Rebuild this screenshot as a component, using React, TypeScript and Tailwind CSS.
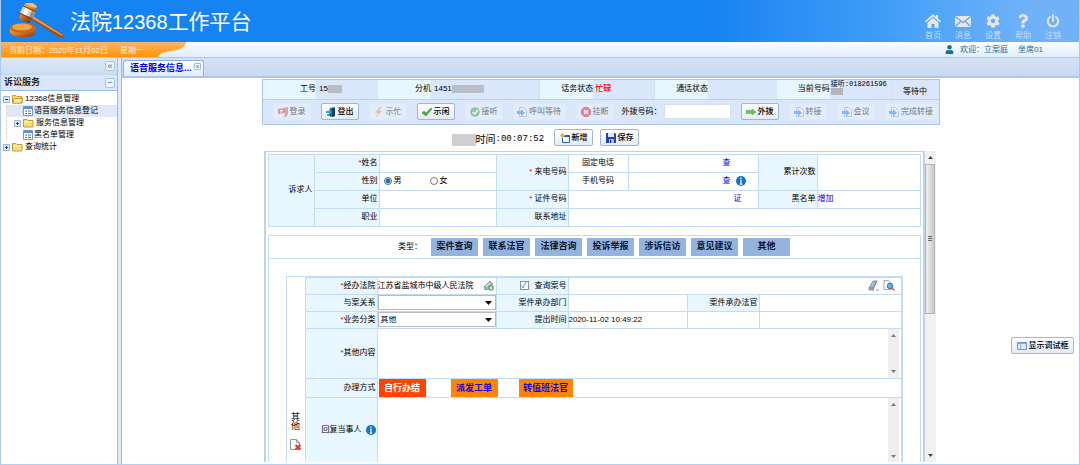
import type { ReactNode } from "react";
import { FaCog, FaQuestion, FaUser } from "react-icons/fa";

const line = "border border-[#c3dcf5]";
const th = `${line} bg-[#e8f6ff] p-0 pr-px text-right font-normal`;
const td = `${line} bg-white p-0`;

function Gavel() {
  return (
    <svg viewBox="0 0 54 36" className="h-9 w-[54px]" aria-hidden="true">
      <defs>
        <linearGradient id="wood" x1="0" y1="0" x2="1" y2="1">
          <stop offset="0" stopColor="#f6b04a" />
          <stop offset="0.5" stopColor="#d9741c" />
          <stop offset="1" stopColor="#7c2c06" />
        </linearGradient>
      </defs>
      <path d="M23 13L54 32l-1 3-4-1-27-17z" fill="#a84a0c" />
      <path d="M23 13L53 32l-1 1-29-17z" fill="#e8964a" />
      <path d="M0 25v4c0 3 6 5 13 5s13-2 13-5v-4z" fill="url(#wood)" />
      <ellipse cx="13" cy="25" rx="13" ry="5" fill="#c9661a" />
      <ellipse cx="12" cy="24" rx="10" ry="3.500" fill="#f0a348" />
      <g transform="rotate(25 18 9)">
        <rect x="12" y="0" width="12" height="19" rx="2" fill="url(#wood)" />
        <rect x="11" y="6" width="14" height="7" fill="#d5d5d5" />
        <rect x="14" y="6" width="4" height="7" fill="#fafafa" />
        <rect x="21" y="6" width="4" height="7" fill="#8f8f8f" />
        <path d="M11 5.500h14M11 13.500h14" stroke="#8a3c0a" />
        <ellipse cx="18" cy="1" rx="6" ry="2" fill="#f7bd68" />
      </g>
    </svg>
  );
}

function HomeIcon({ className }: { className: string }) {
  return (
    <svg viewBox="0 0 16 14" className={className} fill="currentColor" aria-hidden="true">
      <path d="M8 0l3 2.700V1h2v3.500l3 2.800-1 1.200L8 2.500 1 8.500 0 7.300z" />
      <path d="M8 3.800l5.500 4.700V14H9.500v-4h-3v4h-4V8.500z" />
    </svg>
  );
}

function MailIcon({ className }: { className: string }) {
  return (
    <svg viewBox="0 0 16 14" className={className} aria-hidden="true">
      <path d="M0 2h16v11H0z" fill="currentColor" />
      <path d="M0 2.500l8 6 8-6M.5 12.500L6 7M15.500 12.500L10 7" fill="none" stroke="#5aa8f7" strokeWidth="1.200" />
    </svg>
  );
}

function PowerIcon({ className }: { className: string }) {
  return (
    <svg viewBox="0 0 14 14" className={className} fill="none" stroke="currentColor" strokeWidth="2" strokeLinecap="round" aria-hidden="true">
      <path d="M7 1v6M4 3a5.200 5.200 0 1 0 6 0" />
    </svg>
  );
}

function Folder({ open }: { open?: boolean }) {
  return (
    <svg viewBox="0 0 11 10" className="h-2.5 w-[11px] shrink-0" aria-hidden="true">
      <path d="M.5 9V1.500h3.500l1 1h5V9z" fill="#f7dc7c" stroke="#c79a2e" />
      {open ? <path d="M.5 9L2.500 4.500h8L9.500 9z" fill="#fff0a8" stroke="#c79a2e" /> : <path d="M1.500 4h7.500" stroke="#fff6c8" />}
    </svg>
  );
}

function Leaf() {
  return (
    <svg viewBox="0 0 10 10" className="size-2.5 shrink-0" aria-hidden="true">
      <path d="M.5.5h9v9h-9z" fill="#fff" stroke="#6f96cf" />
      <path d="M1 2h8" stroke="#5b8fd8" strokeWidth="2" />
      <path d="M2 5h2M5 5h3M2 7.500h2M5 7.500h3" stroke="#51709c" />
    </svg>
  );
}

function Expander({ open }: { open?: boolean }) {
  return (
    <svg viewBox="0 0 7 7" className="size-[7px] shrink-0" aria-hidden="true">
      <path d="M.5.5h6v6h-6z" fill="#dcebfb" stroke="#9db4d3" />
      <path d={open ? "M2 3.500h3" : "M2 3.500h3M3.500 2v3"} stroke="#26456e" />
    </svg>
  );
}

function Info() {
  return (
    <svg viewBox="0 0 10 10" className="size-2.5 shrink-0" aria-hidden="true">
      <circle cx="5" cy="5" r="5" fill="#1173c9" />
      <path d="M5 1.500v2M5 4.300v4M3.800 8.200h2.400M4 4.500h1" stroke="#fff" strokeWidth="1.200" />
    </svg>
  );
}

type IconName = "login" | "logout" | "bolt" | "tick" | "answer" | "page" | "hangup" | "dial" | "add" | "save" | "panel";

const glyphs: Record<IconName, ReactNode> = {
  login: (
    <>
      <path d="M6 1l4-1v7L8 10H6l1-3z" fill="#b2765a" />
      <path d="M0 2l7-1v5L0 7z" fill="#ef3a50" />
      <path d="M2 3.500h3M2 5h2" stroke="#fff" fill="none" />
    </>
  ),
  logout: (
    <>
      <path d="M4 1l5-1v9l-5 1z" fill="#1b6fae" />
      <path d="M6 1l3 1v7l-3 1z" fill="#163a5c" />
      <path d="M0 4h3V2l3 3-3 3V6H0z" fill="#28a6dc" />
      <path d="M1 8h4" stroke="#222" />
    </>
  ),
  bolt: <path d="M6 0L1 6h3L2 10l6-6H5l3-4z" fill="#eba04a" />,
  tick: <path d="M0 6l2-2 2 2 5-5 1 1-6 7z" fill="#4cad35" stroke="#398c27" strokeWidth="0.500" />,
  answer: (
    <>
      <circle cx="5" cy="5" r="4.800" fill="#43ab4c" />
      <path d="M2.500 5l2 2L8 3" stroke="#fff" strokeWidth="1.500" fill="none" />
    </>
  ),
  page: (
    <>
      <path d="M2.500.5h4l3 3v6h-7z" fill="#f5f9ff" stroke="#8fa9cc" />
      <path d="M0 4h4V2l4 4-4 3.500V7H0z" fill="#3f86dc" />
    </>
  ),
  hangup: (
    <>
      <path d="M3 0h4l3 3v4l-3 3H3L0 7V3z" fill="#e01f2b" />
      <path d="M3 3l4 4M7 3L3 7" stroke="#fff" strokeWidth="1.500" />
    </>
  ),
  dial: <path d="M0 3.500h6V2l4 3-4 3V6.500H0z" fill="#6fc35e" stroke="#4c9f40" strokeWidth="0.500" />,
  add: (
    <>
      <path d="M2.500 2.500h7v7h-7z" fill="#f4f8ff" stroke="#2f5fb3" />
      <path d="M3 3h6" stroke="#2f5fb3" strokeWidth="2" />
      <path d="M2.500 0v5M0 2.500h5M1 1l3 3M4 1L1 4" stroke="#f3b512" />
    </>
  ),
  save: (
    <>
      <path d="M0 0h9l1 1v9H0z" fill="#2b3fa8" />
      <path d="M2 0h6v4H2z" fill="#dfe8fa" />
      <path d="M3 6h5v4H3z" fill="#9fb2dc" />
      <path d="M4 7h1v3H4z" fill="#1b2670" />
    </>
  ),
  panel: (
    <>
      <path d="M.5 1.500h9v7h-9z" fill="#dcebfb" stroke="#6b94cb" />
      <path d="M1 2h8" stroke="#6b94cb" strokeWidth="1.500" />
      <path d="M3.500 3v5" stroke="#9bbce4" />
    </>
  ),
};

function ToolButton({ icon, label, width, disabled }: { icon: IconName; label: string; width: string; disabled?: boolean }) {
  return (
    <button
      type="button"
      disabled={disabled}
      className={`flex h-[17px] shrink-0 items-center justify-center gap-0.5 whitespace-nowrap rounded-[2px] border text-[8px] leading-none ${width} ${
        disabled ? "border-[#e3ebf7] bg-[#ecf2fb] text-black opacity-50" : "border-[#a3b6cf] bg-linear-to-b from-white to-[#e4ebf5] font-medium text-black"
      }`}
    >
      <svg viewBox="0 0 10 10" className="size-2.5 shrink-0" aria-hidden="true">
        {glyphs[icon]}
      </svg>
      {label}
    </button>
  );
}

function ScrollArrows({ className }: { className: string }) {
  return (
    <div className={`flex shrink-0 flex-col items-center justify-between bg-[#efefef] ${className}`} aria-hidden="true">
      <svg viewBox="0 0 5 3" className="h-[3px] w-[5px]"><path d="M0 3L2.500 0 5 3z" fill="#777" /></svg>
      <svg viewBox="0 0 5 3" className="h-[3px] w-[5px]"><path d="M0 0h5L2.500 3z" fill="#777" /></svg>
    </div>
  );
}

function Req() {
  return <span className="text-[#f00000]">*</span>;
}

const navItems = [
  { icon: HomeIcon, label: "首页", size: "h-3.5 w-4" },
  { icon: MailIcon, label: "消息", size: "h-3.5 w-4" },
  { icon: FaCog, label: "设置", size: "size-3.5" },
  { icon: FaQuestion, label: "帮助", size: "h-3.5 w-3" },
  { icon: PowerIcon, label: "注销", size: "size-3.5" },
];

function Header() {
  return (
    <header className="shrink-0">
      <div className="flex h-[42px] items-start bg-linear-to-r from-[#1583f0] from-66% via-[#429ff7] via-83% to-[#6fb2f8] to-95% pl-[9px] pr-[11px]">
        <div className="pt-[3px]">
          <Gavel />
        </div>
        <h1 className="ml-1.5 pt-[7px] text-[21px] leading-[30px] text-white">
          法院<span className="text-[20px]">12368</span>工作平台
        </h1>
        <nav className="ml-auto flex pt-3.5">
          {navItems.map(({ icon: Icon, label, size }) => (
            <a key={label} href="#" className="flex w-[30px] flex-col items-center text-[#e6e6e6]">
              <Icon className={size} />
              <span className="mt-[3px] text-[8px] leading-[9px] text-[#c5dcf5]">{label}</span>
            </a>
          ))}
        </nav>
      </div>
      <div className="flex h-4 border-b border-[#a9c9ea] bg-linear-to-b from-[#fafdff] to-[#e0eef8] text-[8px] leading-[15px]">
        <div className="relative flex w-[185px] items-center">
          <svg viewBox="0 0 185 15" preserveAspectRatio="none" className="absolute inset-0 size-full" aria-hidden="true">
            <defs>
              <linearGradient id="ribbon" x1="0" y1="0" x2="0" y2="1">
                <stop offset="0" stopColor="#ffb26a" />
                <stop offset="1" stopColor="#ff9500" />
              </linearGradient>
            </defs>
            <path d="M0 0h185c-3 13-22 5-28 15H0z" fill="url(#ribbon)" />
          </svg>
          <p className="relative flex gap-3 whitespace-nowrap pl-2 pt-0.5 text-[#fff1dc]">
            <span>当前日期：2020年11月02日</span>
            <span>星期一</span>
          </p>
        </div>
        <div className="ml-auto flex items-center whitespace-nowrap pr-9 text-[#1c6d9b]">
          <FaUser className="mr-1.5 size-[9px]" />
          <span>欢迎：立案庭</span>
          <span className="ml-2.5">坐席01</span>
        </div>
      </div>
    </header>
  );
}

function Sidebar() {
  return (
    <aside className="flex w-[117px] shrink-0 flex-col border-r border-[#99bbe8] bg-white text-[8px]">
      <div className="flex h-[17px] items-center justify-end border-b border-[#c1d5ee] bg-linear-to-b from-[#dbe7f7] to-[#cddef3] pr-0.5">
        <button type="button" aria-label="收起" className="size-[10px] rounded-[2px] border border-[#a9c4e6] bg-[#eef5fd] text-[9px] leading-[7px] text-[#3b618f]">«</button>
      </div>
      <div className="flex h-4 items-center justify-between border-b border-[#99bbe8] bg-[#dbe7f8] pl-[3px] pr-0.5">
        <h2 className="text-[9px] font-medium leading-none">诉讼服务</h2>
        <button type="button" aria-label="折叠" className="size-[10px] rounded-[2px] border border-[#a9c4e6] bg-[#eef5fd] text-[9px] leading-[7px] text-[#3b618f]">−</button>
      </div>
      <ul className="pt-0.5 leading-3">
        <li>
          <div className="flex h-3 items-center gap-0.5 pl-0.5"><Expander open /><Folder open />12368信息管理</div>
          <ul className="ml-[5px] border-l border-dotted border-[#c4c4c4]">
            <li className="flex h-3 items-center bg-[#dfe8f6] pl-4"><Leaf /><a href="#" className="ml-px">语音服务信息登记</a></li>
            <li className="flex h-3 items-center gap-0.5 pl-[7px]"><Expander /><Folder /><span>服务信息管理</span></li>
            <li className="flex h-3 items-center pl-4"><Leaf /><a href="#" className="ml-px">黑名单管理</a></li>
          </ul>
        </li>
        <li className="flex h-3 items-center gap-0.5 pl-0.5"><Expander /><Folder />查询统计</li>
      </ul>
    </aside>
  );
}

const phoneLabel = "border-r border-[#d5e5f8] bg-[#e8f6ff] p-0 text-right font-normal";
const phoneValue = "border-r border-dotted border-[#cbdcf0] p-0 pl-0.5";

function PhonePanel() {
  return (
    <section className="border border-[#a9c5e8] bg-[#dae7fa]">
      <table className="w-full table-fixed border-collapse text-[8px] leading-[10px]">
        <colgroup>
          <col className="w-[8%]" /><col className="w-[9%]" /><col className="w-[8%]" /><col className="w-[16%]" /><col className="w-[8%]" /><col className="w-[9%]" />
          <col className="w-[8%]" /><col className="w-[10%]" /><col className="w-[8%]" /><col className="w-[9%]" /><col className="w-[7%]" />
        </colgroup>
        <tbody>
          <tr className="h-[19px] border-b border-[#b8d2f0]">
            <th className={phoneLabel}>工号</th>
            <td className={phoneValue}><span className="flex items-center">15<span className="h-2 w-3.5 bg-[#b9bcc4]" /></span></td>
            <th className={phoneLabel}>分机</th>
            <td className={phoneValue}><span className="flex items-center">1451<span className="h-2 w-8 bg-[#b9bfca]" /></span></td>
            <th className={phoneLabel}>话务状态</th>
            <td className="border-r border-dotted border-[#cbdcf0] p-0 pl-px text-[8px] font-medium text-[#ff0000]">忙碌</td>
            <th className={phoneLabel}>通话状态</th>
            <td className={phoneValue} />
            <th className={phoneLabel}>当前号码</th>
            <td className="border-r border-dotted border-[#cbdcf0] p-0 align-top text-[7px] leading-2">
              <span className="block whitespace-nowrap font-['Liberation_Mono','Noto_Sans_CJK_SC',monospace]">接听:018261596</span>
              <span className="block h-[7px] w-3 bg-[#b2b5bb]" />
            </td>
            <td className="p-0 pt-1.5 text-center">等待中</td>
          </tr>
        </tbody>
      </table>
      <div className="flex h-6 items-center gap-2.5 pl-2.5">
        <ToolButton icon="login" label="登录" width="w-[38px]" disabled />
        <ToolButton icon="logout" label="登出" width="w-[38px]" />
        <ToolButton icon="bolt" label="示忙" width="w-[38px]" disabled />
        <ToolButton icon="tick" label="示闲" width="w-[38px]" />
        <ToolButton icon="answer" label="接听" width="w-[38px]" disabled />
        <ToolButton icon="page" label="呼叫等待" width="w-[53px]" disabled />
        <ToolButton icon="hangup" label="挂断" width="w-[38px]" disabled />
        <label className="-ml-0.5 flex items-center whitespace-nowrap text-[8px]">
          外拨号码：
          <input className="ml-0.5 h-[15px] w-[67px] border border-[#d5e0ee] bg-white px-1" />
        </label>
        <ToolButton icon="dial" label="外拨" width="w-[38px]" />
        <ToolButton icon="page" label="转接" width="w-[38px]" disabled />
        <ToolButton icon="page" label="会议" width="w-[38px]" disabled />
        <ToolButton icon="page" label="完成转接" width="w-[53px]" disabled />
      </div>
    </section>
  );
}

function CallerTable() {
  return (
    <table className="w-full table-fixed border-collapse text-[8px] leading-[10px]">
      <colgroup>
        <col className="w-[46px]" /><col className="w-[65px]" /><col className="w-[117px]" /><col className="w-[72px]" />
        <col className="w-[60px]" /><col className="w-[130px]" /><col className="w-[59px]" /><col />
      </colgroup>
      <tbody>
        <tr className="h-[18px]">
          <th rowSpan={4} className={th}>诉求人</th>
          <th className={th}><Req />姓名</th>
          <td className={td} />
          <th rowSpan={2} className={th}><Req /> 来电号码</th>
          <td className={`${td} text-center`}>固定电话</td>
          <td className={td}><a href="#" className="ml-[94px] text-[#0000ee]">查</a></td>
          <th rowSpan={2} className={th}>累计次数</th>
          <td rowSpan={2} className={td} />
        </tr>
        <tr className="h-[18px]">
          <th className={th}>性别</th>
          <td className={td}>
            <div className="flex items-center pl-1">
              <label className="flex w-[46px] items-center gap-0.5"><input type="radio" name="sex" defaultChecked className="m-0 size-2 accent-[#2f6f96]" />男</label>
              <label className="flex items-center gap-0.5"><input type="radio" name="sex" className="m-0 size-2" />女</label>
            </div>
          </td>
          <td className={`${td} text-center`}>手机号码</td>
          <td className={td}><div className="flex items-center gap-[5px] pl-[94px]"><a href="#" className="text-[#0000ee]">查</a><Info /></div></td>
        </tr>
        <tr className="h-[18px]">
          <th className={th}>单位</th>
          <td className={td} />
          <th className={th}><Req /> 证件号码</th>
          <td colSpan={2} className={`${td} pr-4 text-right`}><a href="#" className="text-[#0000ee]">证</a></td>
          <th className={th}>黑名单</th>
          <td className={td}><a href="#" className="text-[#0000ee]">增加</a></td>
        </tr>
        <tr className="h-[18px]">
          <th className={th}>职业</th>
          <td className={td} />
          <th className={th}>联系地址</th>
          <td colSpan={4} className={td} />
        </tr>
      </tbody>
    </table>
  );
}

const types = ["案件查询", "联系法官", "法律咨询", "投诉举报", "涉诉信访", "意见建议", "其他"];

function Dropdown({ label, options }: { label: string; options: string[] }) {
  return (
    <div className="relative">
      <select aria-label={label} className="block h-[15px] w-full appearance-none border border-[#b4bcc6] bg-white pl-0.5 text-[8px] leading-none">
        {options.map((o) => <option key={o}>{o}</option>)}
      </select>
      <svg viewBox="0 0 7 4" className="pointer-events-none absolute right-1 top-1.5 h-1 w-[7px]" aria-hidden="true"><path d="M0 0h7L3.500 4z" /></svg>
    </div>
  );
}

function CaseForm() {
  return (
    <table className="w-full table-fixed border-collapse border-r-2 border-[#c3dcf5] text-[8px] leading-[10px]">
      <colgroup>
        <col className="w-[72px]" /><col className="w-[119px]" /><col className="w-[72px]" /><col className="w-[119px]" /><col className="w-[72px]" /><col />
      </colgroup>
      <tbody>
        <tr className="h-[17px]">
          <th className={th}><Req />经办法院</th>
          <td className={td}>
            <div className="flex items-center justify-between pr-0.5">
              <span className="whitespace-nowrap">江苏省盐城市中级人民法院</span>
              <svg viewBox="0 0 11 11" className="size-[11px]" aria-hidden="true">
                <path d="M1 7l6-6 3 3-4 5-4 1z" fill="#8fb7dc" stroke="#6a86a6" strokeWidth="0.700" />
                <path d="M3 7l4-4" stroke="#fff" />
                <circle cx="8" cy="8" r="2.800" fill="#58ad3f" />
                <path d="M6.500 8h3M8 6.500v3" stroke="#fff" />
              </svg>
            </div>
          </td>
          <th className={th}>
            <label className="flex items-center justify-end gap-1.5">
              <input
                type="checkbox"
                defaultChecked
                className="m-0 size-[9px] appearance-none border border-[#8f8f8f] bg-white text-center text-[8px] leading-[7px] text-[#3c5a96] checked:before:block checked:before:content-['✓']"
              />
              查询案号
            </label>
          </th>
          <td colSpan={3} className={td}>
            <div className="flex justify-end gap-1 pr-1.5">
              <svg viewBox="0 0 11 11" className="size-[11px]" aria-hidden="true">
                <path d="M1 8l4-7h4L5.500 8v2H1z" fill="#a9bdd8" stroke="#5d6f89" strokeWidth="0.700" />
                <path d="M1 8h4.500L9 1M8 10h3" stroke="#5d6f89" strokeWidth="0.700" fill="none" />
              </svg>
              <svg viewBox="0 0 12 11" className="h-[11px] w-3" aria-hidden="true">
                <path d="M1 .5h4.500l2.500 2.500v6.500H1z" fill="#fff" stroke="#7891b3" strokeWidth="0.800" />
                <circle cx="7" cy="6" r="2.700" fill="#6ab2f0" stroke="#2d77c4" />
                <path d="M9 8l2.500 2.500" stroke="#c76a1d" strokeWidth="1.500" />
              </svg>
            </div>
          </td>
        </tr>
        <tr className="h-[17px]">
          <th className={th}>与案关系</th>
          <td className={td}><Dropdown label="与案关系" options={[""]} /></td>
          <th className={th}>案件承办部门</th>
          <td className={td} />
          <th className={th}>案件承办法官</th>
          <td className={td} />
        </tr>
        <tr className="h-[17px]">
          <th className={th}><Req />业务分类</th>
          <td className={td}><Dropdown label="业务分类" options={["其他"]} /></td>
          <th className={th}>提出时间</th>
          <td className={td}>2020-11-02 10:49:22</td>
          <td className={td} />
          <td className={td} />
        </tr>
        <tr className="h-[50px]">
          <th className={th}><Req />其他内容</th>
          <td colSpan={5} className={td}>
            <div className="flex h-[49px]">
              <textarea aria-label="其他内容" className="block min-w-0 flex-1 resize-none" />
              <ScrollArrows className="mr-0.5 w-[11px] py-[5px]" />
            </div>
          </td>
        </tr>
        <tr className="h-[19px]">
          <th className={th}>办理方式</th>
          <td colSpan={5} className={td}>
            <div className="flex pl-px text-[9px] font-bold">
              <button type="button" className="h-[18px] w-[47px] bg-[#ff4500] text-white">自行办结</button>
              <button type="button" className="ml-[25px] h-[18px] w-[47px] bg-[#ff8400] text-[#1a00e0]">派发工单</button>
              <button type="button" className="ml-[21px] h-[18px] w-[54px] bg-[#ff8400] text-[#1a00e0]">转值班法官</button>
            </div>
          </td>
        </tr>
        <tr className="h-[66px]">
          <th className={`${th} border-b-0`}><span className="flex items-center justify-end gap-1">回复当事人 <Info /></span></th>
          <td colSpan={5} className={`${td} border-b-0`}>
            <div className="flex h-[65px]">
              <textarea aria-label="回复当事人" className="block min-w-0 flex-1 resize-none" />
              <ScrollArrows className="mr-0.5 w-[11px] py-[5px]" />
            </div>
          </td>
        </tr>
      </tbody>
    </table>
  );
}

function Workspace() {
  return (
    <main className="flex min-w-0 flex-1 flex-col border-l border-[#99bbe8] bg-white pb-0.5">
      <div className="flex h-5 shrink-0 items-end border-b-2 border-[#a9c6ec] bg-linear-to-b from-[#d3e1f3] to-[#c9daf0] pl-px">
        <div className="flex h-4 w-[81px] items-center rounded-t-[3px] border border-b-0 border-[#8db2e3] bg-linear-to-b from-white to-[#dfebfa] pl-1.5 pr-0.5">
          <a href="#" className="whitespace-nowrap text-[9px] font-bold leading-none text-[#0000e6]">语音服务信息...</a>
          <button type="button" aria-label="关闭" className="mb-1 ml-auto size-[7px] rounded-[1px] border border-[#9fb9da] bg-white text-[7px] leading-[5px] text-[#3b618f]">×</button>
        </div>
      </div>
      <div className="mx-auto flex min-h-0 w-full max-w-[678px] flex-1 flex-col pt-px">
        <PhonePanel />
        <div className="flex h-[26px] shrink-0 items-center gap-[7px] pl-[190px]">
          <p className="mr-[3px] flex items-center pt-1 text-[10px] leading-none">
            <span className="h-3 w-6 bg-[#cfcfcf]" />
            时间<span className="font-['Liberation_Mono',monospace] text-[9px]">:00:07:52</span>
          </p>
          <ToolButton icon="add" label="新增" width="w-[39px]" />
          <ToolButton icon="save" label="保存" width="w-[39px]" />
        </div>
        <div className="flex min-h-0 flex-1 overflow-hidden pl-0.5 pr-1">
          <div className="min-w-0 flex-1 border-l-2 border-r-2 border-t border-[#bdd3ec] px-0.5 pt-0.5">
            <CallerTable />
            <section className="mt-2 h-[240px] border-x border-t border-[#c3dcf5]">
              <div className="flex h-[23px] items-center justify-center gap-[5px] border-b border-[#c3dcf5] text-[9px]">
                <span className="mr-1 text-[8px]">类型：</span>
                {types.map((t) => (
                  <button key={t} type="button" className="h-[18px] w-[47px] bg-[#94b4de] font-bold leading-none text-[#0a1430]">{t}</button>
                ))}
              </div>
              <div className="mx-[17px] mt-[17px] flex border-l border-t border-[#c3dcf5]">
                <div className="flex w-[18px] shrink-0 flex-col items-center pt-[136px] text-[9px] leading-[9px]">
                  <span>其</span>
                  <span>他</span>
                  <svg viewBox="0 0 11 11" className="mt-2 size-[11px]" aria-hidden="true">
                    <path d="M.5.5h6l3 3v7h-9z" fill="#fff" stroke="#8b98aa" />
                    <path d="M6.500.5v3h3" fill="none" stroke="#8b98aa" />
                    <path d="M5.500 6l5 4.500M10.500 6l-5 4.500" stroke="#e8381a" strokeWidth="2" />
                  </svg>
                </div>
                <div className="min-w-0 flex-1"><CaseForm /></div>
              </div>
            </section>
          </div>
          <div className="flex w-[11px] flex-col items-center bg-[#f1f1f1] py-[5px]" aria-hidden="true">
            <svg viewBox="0 0 5 3" className="h-[3px] w-[5px]"><path d="M0 3L2.500 0 5 3z" fill="#444" /></svg>
            <div className="mt-[5px] flex h-[150px] w-2.5 flex-col items-center justify-center gap-px border border-[#b5b5b5] bg-linear-to-r from-[#f0f0f0] to-[#c9c9c9]">
              <span className="h-px w-1 bg-[#666]" />
              <span className="h-px w-1 bg-[#666]" />
              <span className="h-px w-1 bg-[#666]" />
            </div>
            <svg viewBox="0 0 5 3" className="mt-auto h-[3px] w-[5px]"><path d="M0 0h5L2.500 3z" fill="#444" /></svg>
          </div>
        </div>
      </div>
    </main>
  );
}

export default function App() {
  return (
    <div className="relative flex h-screen flex-col overflow-hidden border-x border-[#a9c9ef] bg-white font-['Liberation_Sans','Noto_Sans_CJK_SC',sans-serif] text-black">
      <Header />
      <div className="flex min-h-0 flex-1 gap-[3px] border-b border-[#b5cff0] bg-[#dfe8f6]">
        <Sidebar />
        <Workspace />
      </div>
      <div className="absolute right-[5px] top-[337px]">
        <ToolButton icon="panel" label="显示调试框" width="w-[63px]" />
      </div>
    </div>
  );
}
